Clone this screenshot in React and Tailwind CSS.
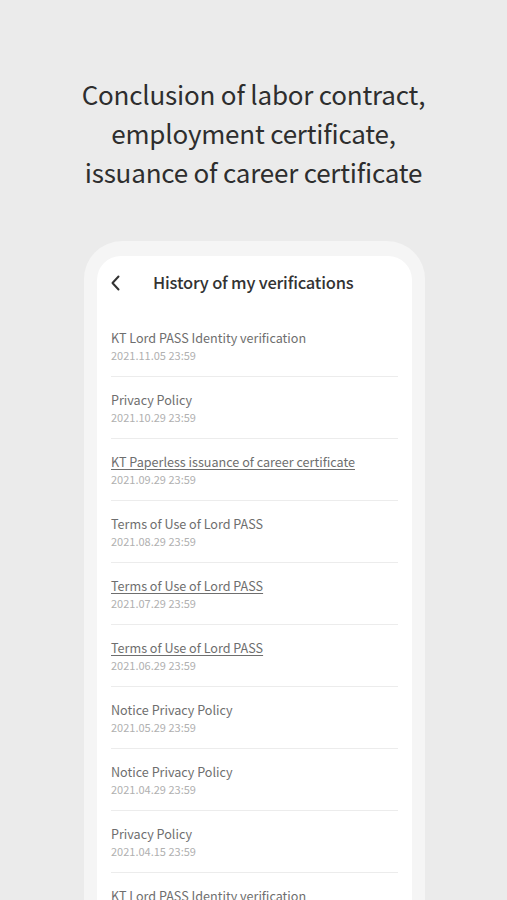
import React from 'react';

const items = [
  { title: 'KT Lord PASS Identity verification', date: '2021.11.05 23:59' },
  { title: 'Privacy Policy', date: '2021.10.29 23:59' },
  { title: 'KT Paperless issuance of career certificate', date: '2021.09.29 23:59', link: true },
  { title: 'Terms of Use of Lord PASS', date: '2021.08.29 23:59' },
  { title: 'Terms of Use of Lord PASS', date: '2021.07.29 23:59', link: true },
  { title: 'Terms of Use of Lord PASS', date: '2021.06.29 23:59', link: true },
  { title: 'Notice Privacy Policy', date: '2021.05.29 23:59' },
  { title: 'Notice Privacy Policy', date: '2021.04.29 23:59' },
  { title: 'Privacy Policy', date: '2021.04.15 23:59' },
  { title: 'KT Lord PASS Identity verification', date: '2021.03.29 23:59' },
];

export default function App() {
  return (
    <div
      className="h-[900px] w-full overflow-hidden bg-[#ebebeb]"
      style={{ fontFamily: '"Noto Sans CJK KR", "Noto Sans", sans-serif' }}
    >
      <h1 className="pt-[74px] text-center text-[26px] leading-[39px] font-normal text-[#2e2e2e] tracking-[-0.2px]">
        Conclusion of labor contract,
        <br />
        employment certificate,
        <br />
        issuance of career certificate
      </h1>

      <div className="mt-[50px] ml-[84px] w-[341px] rounded-t-[38px] bg-[#f5f5f5] px-[13px] pt-[15px]">
        <div className="rounded-t-[24px] bg-white">
          <div className="flex h-[53px] items-center pl-[13px]">
            <svg width="12" height="16" viewBox="0 0 12 16" className="text-[#333]">
              <path d="M8.5 1.5 L2.5 8 L8.5 14.5" fill="none" stroke="currentColor" strokeWidth="2" strokeLinecap="round" strokeLinejoin="round" />
            </svg>
            <span className="ml-[31px] text-[16.5px] font-medium text-[#333] tracking-[-0.2px]">
              History of my verifications
            </span>
          </div>
          <ul className="px-[14px] pt-[6px]">
            {items.map((it, i) => (
              <li key={i} className="border-b border-[#ececec] pt-[14px] pb-[13px]">
                <div className={`text-[12.6px] leading-[18px] text-[#6e6e6e] ${it.link ? 'underline underline-offset-2' : ''}`}>
                  {it.title}
                </div>
                <div className="text-[11px] leading-[16px] text-[#b0b0b0]">{it.date}</div>
              </li>
            ))}
          </ul>
        </div>
      </div>
    </div>
  );
}
